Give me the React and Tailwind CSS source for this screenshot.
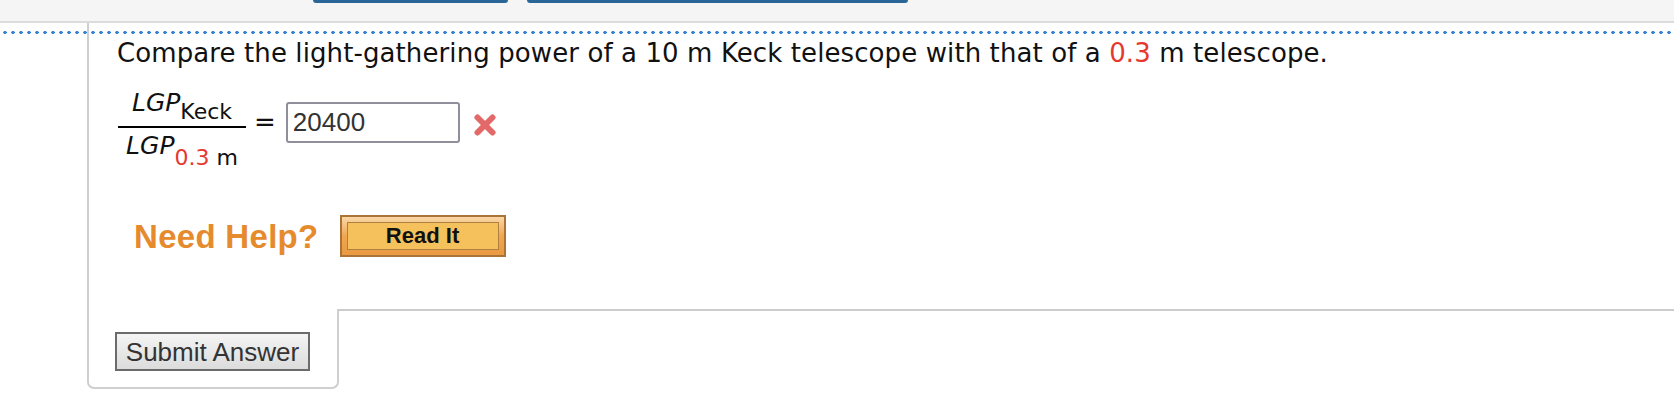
import React from 'react';

const sans = "font-['Liberation_Sans',Arial,sans-serif]";

const WrongMark = () => (
  <svg width="24" height="24" viewBox="0 0 24 24" className="block shrink-0">
    <g stroke="#e05858" strokeWidth="6" strokeLinecap="round" opacity="0.9">
      <line x1="4.5" y1="4.5" x2="19.5" y2="19.5" />
      <line x1="19.5" y1="4.5" x2="4.5" y2="19.5" />
    </g>
  </svg>
);

const Fraction = () => (
  <div className="ml-px w-[128px] flex flex-col items-center">
    {/* numerator */}
    <div className="h-[34px] leading-[22px] whitespace-nowrap">
      <i className="text-[25px]">LGP</i>
      <span className="text-[22px] align-[-8px]">Keck</span>
    </div>
    <div className="h-[2px] w-full bg-black" />
    {/* denominator */}
    <div className="h-[44px] pt-[7px] leading-[22px] whitespace-nowrap">
      <i className="text-[25px]">LGP</i>
      <span className="text-[22px] align-[-11px]">
        <span className="text-[#e5392f]">0.3</span> m
      </span>
    </div>
  </div>
);

export default function App() {
  return (
    <div className="min-h-screen bg-white text-[#111] font-['DejaVu_Sans',Verdana,sans-serif]">
      {/* top toolbar strip */}
      <div className="h-[23px] bg-[#f5f5f5] border-b-2 border-[#dcdcdc] flex items-start gap-[19px] pl-[313px]">
        <div className="w-[195px] h-[3px] bg-[#2b6699] rounded-b-[4px]" />
        <div className="w-[381px] h-[3px] bg-[#2b6699] rounded-b-[4px]" />
      </div>

      <div className="relative">
        {/* dotted separator */}
        <div className="absolute left-0 right-0 top-[8px] h-[3px] bg-[radial-gradient(circle,#3584dc_1.5px,transparent_1.9px)] bg-[length:8px_3px] bg-[position:1px_0]" />

        <div className="relative ml-[87px] border-l-2 border-[#cfcfcf] pl-[28px] pt-[15px] pb-[52px]">
          <p className="text-[26px] leading-[30px] tracking-[0.1px]">
            Compare the light-gathering power of a 10 m Keck telescope with that of a{' '}
            <span className="text-[#e5392f]">0.3</span> m telescope.
          </p>

          <div className="mt-[24px] flex items-start">
            <Fraction />
            <span className="ml-[8px] mt-[17px] text-[26px] leading-[26px]">=</span>
            <input
              readOnly
              value="20400"
              className={`${sans} ml-[10px] mt-[10px] w-[174px] h-[41px] border-2 border-[#8f8f9b] rounded-[3px] pl-[5px] text-[26px] text-[#333] bg-white outline-none`}
            />
            <div className="ml-[13px] mt-[21px]">
              <WrongMark />
            </div>
          </div>

          <div className="mt-[43px] flex items-center">
            <span className={`${sans} ml-[17px] text-[33px] leading-none font-bold tracking-[0.3px] text-[#e58b2e]`}>
              Need Help?
            </span>
            <button className={`${sans} ml-[21px] w-[166px] h-[42px] border-2 border-[#a97436] bg-gradient-to-b from-[#f9d7a6] via-[#f1a64f] to-[#e99a42] p-[5px]`}>
              <div className="h-full border border-[#b0803f] bg-[#f4c15d] flex items-center justify-center text-[22px] leading-none font-bold text-[#111]">
                Read It
              </div>
            </button>
          </div>
        </div>

        {/* submit tab */}
        <div className="flex">
          <div className="ml-[87px] w-[252px] h-[80px] border-l-2 border-r-2 border-b-2 border-[#cfcfcf] rounded-b-[7px] pl-[26px] pt-[23px]">
            <button className={`${sans} w-[195px] h-[39px] border-2 border-[#6b6b6b] bg-gradient-to-b from-[#f4f4f4] to-[#dcdcdc] text-[26px] leading-none text-[#333]`}>
              Submit Answer
            </button>
          </div>
          <div className="flex-1 border-t-2 border-[#cccccc]" />
        </div>
      </div>
    </div>
  );
}
